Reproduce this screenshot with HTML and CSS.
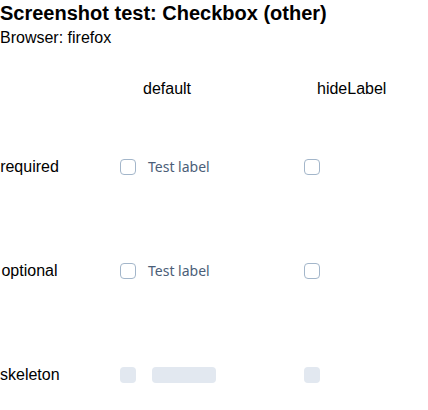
FILE: index.html
```html
<!DOCTYPE html>
<html>
<head>
<meta charset="utf-8">
<link rel="stylesheet" href="styles.css">
</head>
<body>
<h1 class="title">Screenshot test: Checkbox (other)</h1>
<p class="browser">Browser: firefox</p>
<div class="matrix">
  <div class="corner"></div>
  <div class="colhead col-default">default</div>
  <div class="colhead col-hide">hideLabel</div>

  <div class="rowhead">required</div>
  <div class="cell col-default"><label class="cb"><span class="box"></span><span class="cb-label">Test label</span></label></div>
  <div class="cell col-hide"><label class="cb"><span class="box"></span></label></div>

  <div class="rowhead">optional</div>
  <div class="cell col-default"><label class="cb"><span class="box"></span><span class="cb-label">Test label</span></label></div>
  <div class="cell col-hide"><label class="cb"><span class="box"></span></label></div>

  <div class="rowhead">skeleton</div>
  <div class="cell col-default"><div class="cb"><span class="sk-box"></span><span class="sk-bar"></span></div></div>
  <div class="cell col-hide"><div class="cb"><span class="sk-box"></span></div></div>
</div>
</body>
</html>
```
FILE: styles.css
```css
html, body {
  margin: 0;
  padding: 0;
  background: #ffffff;
  font-family: "Liberation Sans", Arial, sans-serif;
  color: #000000;
}
.title {
  margin: 0;
  font-size: 20px;
  line-height: 26px;
  font-weight: bold;
}
.browser {
  margin: 3px 0 0 0;
  font-size: 16px;
  line-height: 18px;
}
.matrix {
  margin-top: 16px;
  display: grid;
  grid-template-columns: 120px 184px 124px;
  grid-template-rows: 52px 104px 104px 104px;
  align-items: center;
  font-size: 16px;
  line-height: 18px;
}
.rowhead {
  width: 59px;
  text-align: center;
}
.colhead.col-default { padding-left: 23px; }
.colhead.col-hide { padding-left: 13px; }
.cb {
  display: flex;
  align-items: center;
}
.box {
  box-sizing: border-box;
  width: 16px;
  height: 16px;
  border: 1px solid #a3b6ca;
  border-radius: 4px;
  background: #fff;
}
.cb-label {
  margin-left: 12px;
  font-family: "Noto Sans", sans-serif;
  font-size: 14px;
  line-height: 18px;
  color: #4b5e78;
}
.sk-box {
  width: 16px;
  height: 16px;
  border-radius: 4px;
  background: #e2e8f0;
}
.sk-bar {
  margin-left: 16px;
  width: 64px;
  height: 16px;
  border-radius: 4px;
  background: #e2e8f0;
}
```
